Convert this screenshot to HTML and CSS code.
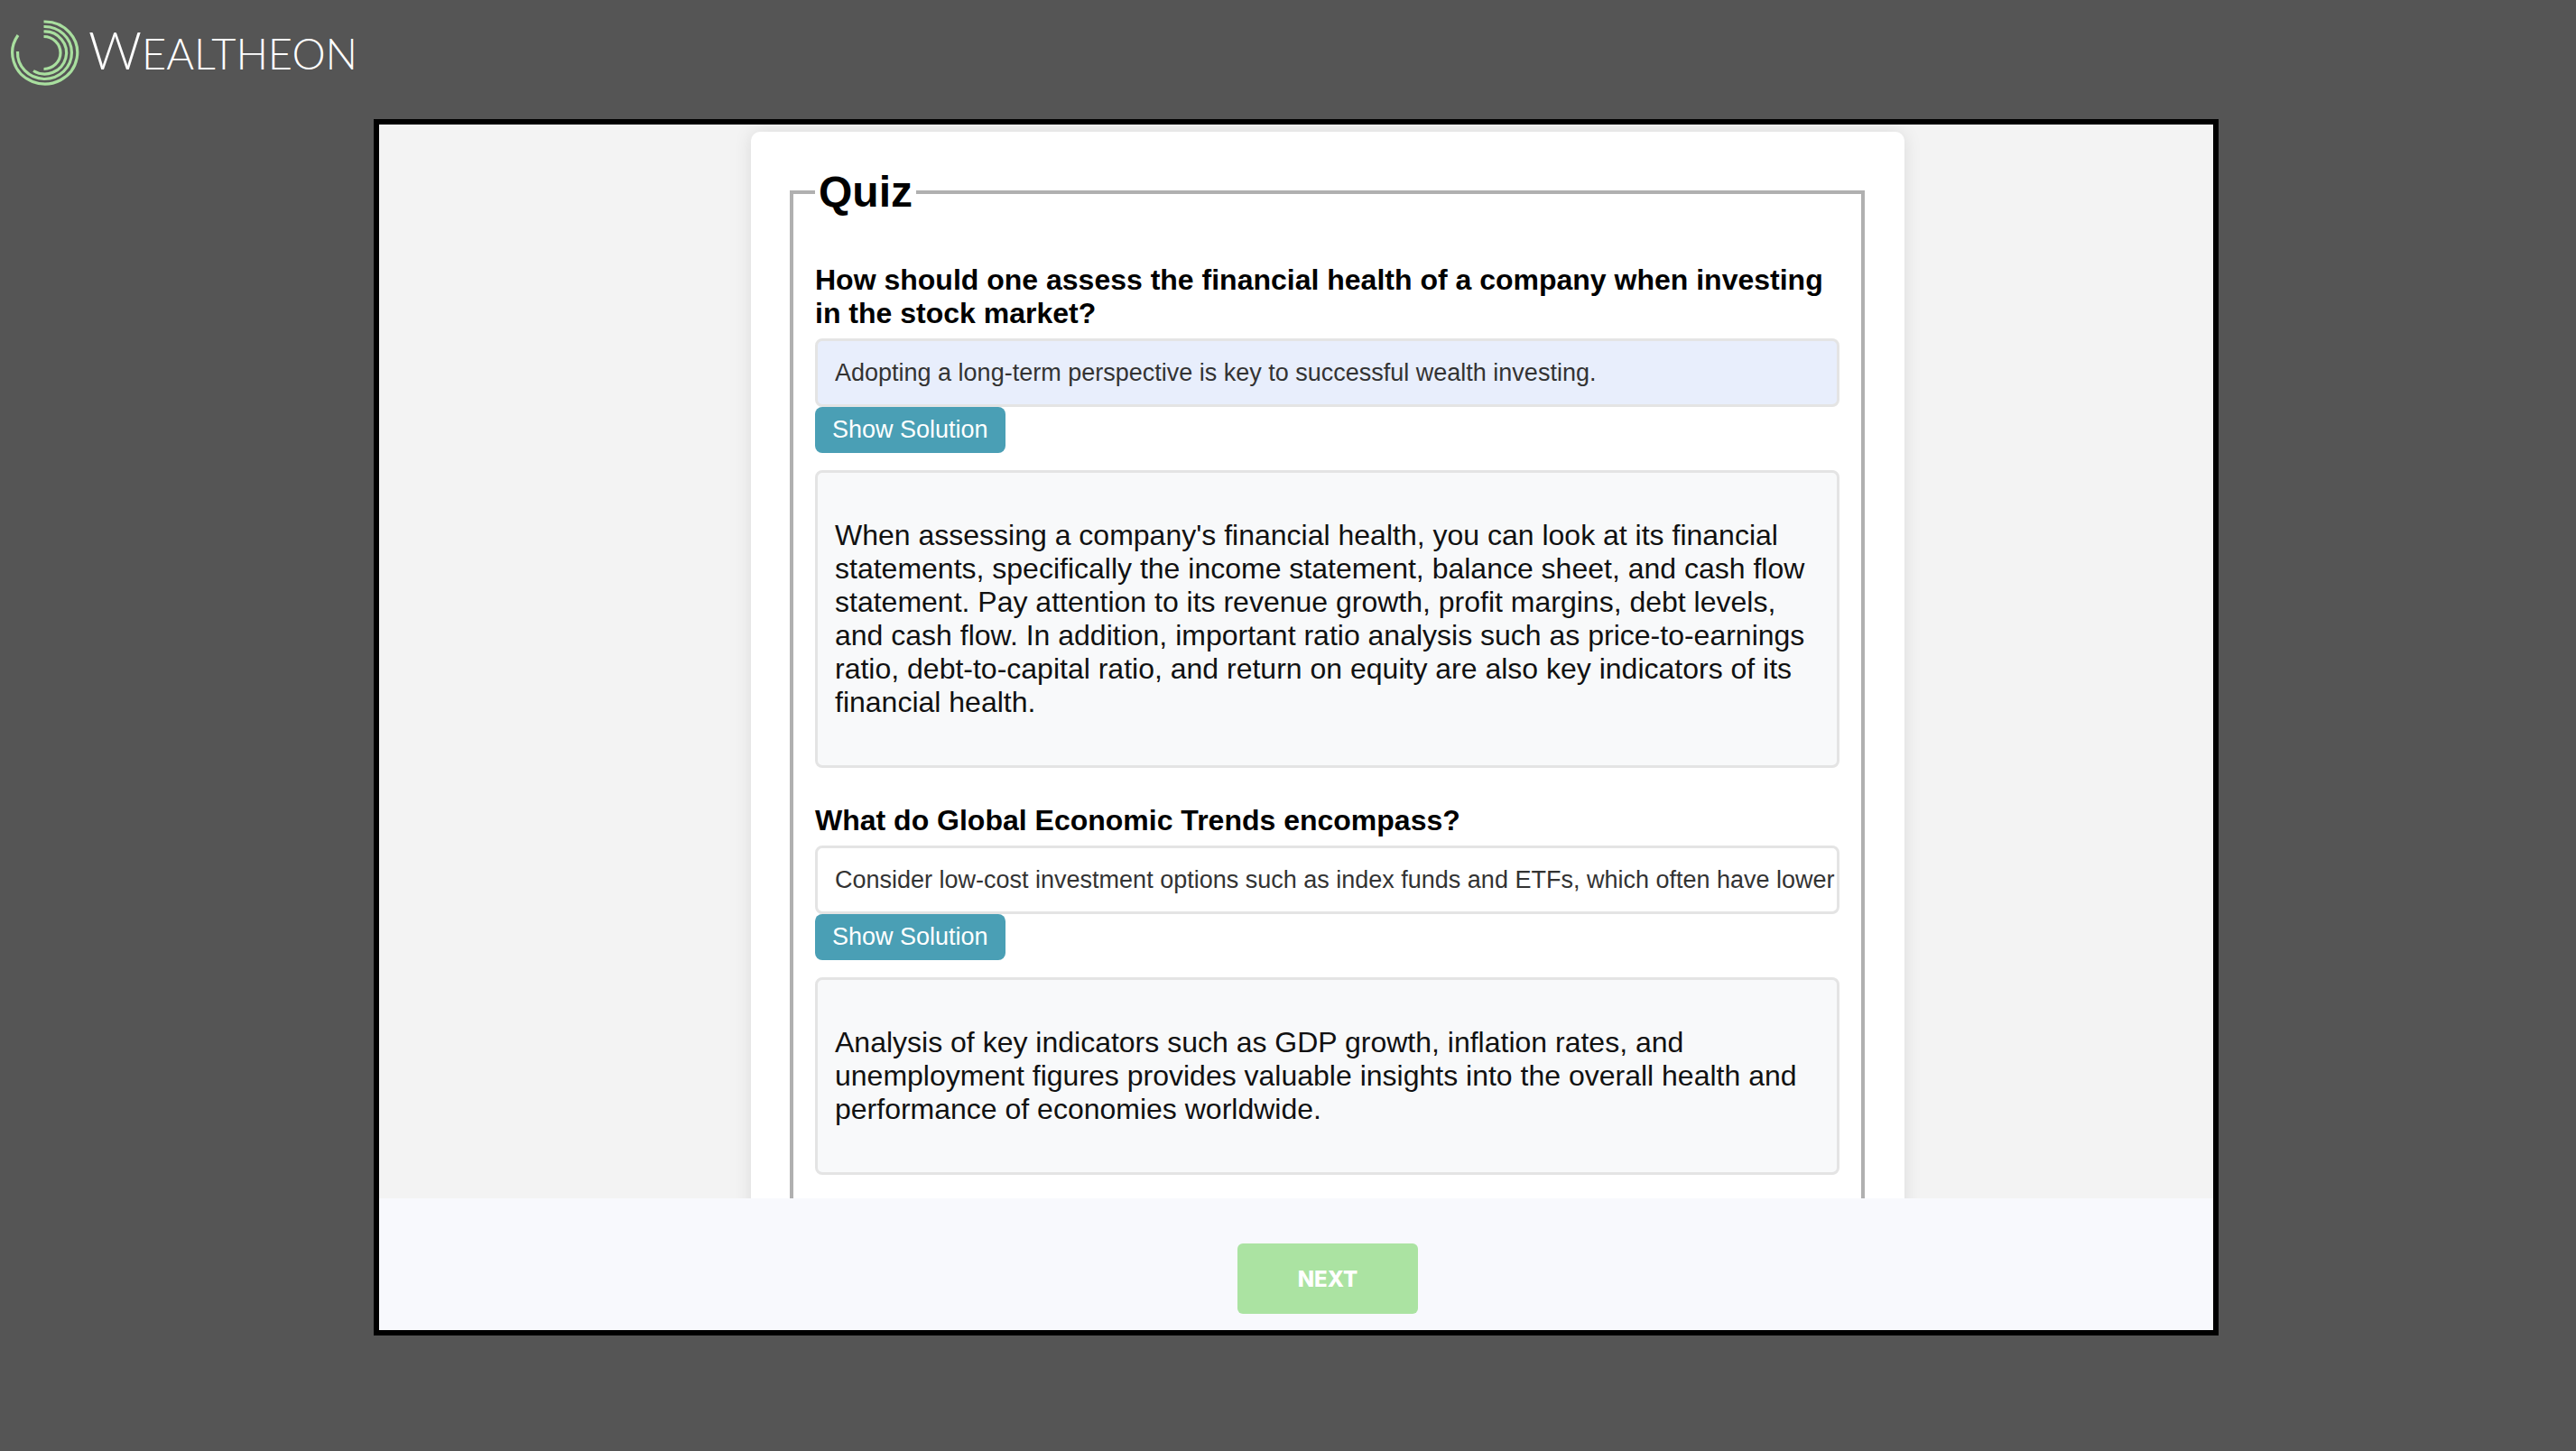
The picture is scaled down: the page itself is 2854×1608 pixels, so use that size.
FILE: index.html
```html
<!DOCTYPE html>
<html lang="en">
<head>
<meta charset="utf-8">
<title>Wealtheon – Quiz</title>
<link rel="stylesheet" href="styles.css">
</head>
<body>
<header class="header">
  <a class="brand" href="#" aria-label="Wealtheon">
    <svg class="brand-mark" viewBox="0 0 80 76" aria-hidden="true">
      <g fill="none" stroke="#a9df9f" stroke-width="3.200">
        <path d="M38.500 5A36 34.500 0 1 1 10 20"/>
        <path d="M38.500 10.500A30 29 0 1 1 9.500 38"/>
        <path d="M38.500 16A24 23.500 0 1 1 27 59.500"/>
        <path d="M38.500 21.500A18.500 18 0 1 1 38.500 57.500"/>
      </g>
    </svg>
    <span class="brand-name"><span class="brand-initial">W</span>EALTHEON</span>
  </a>
</header>
<main class="frame">
  <div class="viewport">
    <form class="card" id="quiz">
      <fieldset class="quiz">
        <legend class="quiz-title">Quiz</legend>
        <section class="item">
          <label class="question" for="answer-1">How should one assess the financial health of a company when investing in the stock market?</label>
          <input class="answer answer-filled" id="answer-1" type="text" value="Adopting a long-term perspective is key to successful wealth investing.">
          <button class="reveal" type="button">Show Solution</button>
          <div class="solution"><p class="solution-text">When assessing a company's financial health, you can look at its financial statements, specifically the income statement, balance sheet, and cash flow statement. Pay attention to its revenue growth, profit margins, debt levels, and cash flow. In addition, important ratio analysis such as price-to-earnings ratio, debt-to-capital ratio, and return on equity are also key indicators of its financial health.</p></div>
        </section>
        <section class="item">
          <label class="question" for="answer-2">What do Global Economic Trends encompass?</label>
          <input class="answer" id="answer-2" type="text" value="Consider low-cost investment options such as index funds and ETFs, which often have lower">
          <button class="reveal" type="button">Show Solution</button>
          <div class="solution"><p class="solution-text">Analysis of key indicators such as GDP growth, inflation rates, and unemployment figures provides valuable insights into the overall health and performance of economies worldwide.</p></div>
        </section>
      </fieldset>
    </form>
  </div>
  <footer class="footer">
    <button class="next" type="submit" form="quiz">NEXT</button>
  </footer>
</main>
</body>
</html>
```
FILE: styles.css
```css
* {
  box-sizing: border-box;
}

body {
  margin: 0;
  min-height: 100vh;
  display: flex;
  flex-direction: column;
  background: #555;
  color: #111;
  font-family: "Liberation Sans", Arial, sans-serif;
  font-size: 32px;
  line-height: 37px;
}

.header {
  padding: 17px 10px 0;
  height: 132px;
}

.brand {
  display: inline-flex;
  align-items: center;
  gap: 8px;
  color: #fff;
  text-decoration: none;
}

.brand-mark {
  width: 80px;
  height: 76px;
}

.brand-name {
  font-family: Lato, sans-serif;
  font-weight: 300;
  font-size: 47px;
  line-height: 76px;
}

.brand-initial {
  font-size: 58px;
}

.frame {
  flex: 1;
  display: flex;
  flex-direction: column;
  margin: 0 396px 128px 414px;
  border: 6px solid #000;
  background: #f8f9fd;
}

.viewport {
  flex: 1 1 0;
  min-height: 0;
  overflow: hidden;
  padding: 8px 342px 0 412px;
  background: #f3f3f3;
}

.card {
  min-height: 100%;
  padding: 39px 44px 40px 43px;
  border-radius: 10px;
  background: #fff;
  box-shadow: 0 0 20px rgba(0, 0, 0, 0.1);
}

.quiz {
  min-width: 0;
  margin: 0;
  padding: 11px 24px 60px;
  border: 4px solid #b0b0b0;
}

.quiz-title {
  padding: 0 4px;
  color: #000;
  font-size: 48px;
  font-weight: bold;
  line-height: 56px;
}

.item {
  display: flex;
  flex-direction: column;
  align-items: flex-start;
  padding-top: 40px;
}

.question {
  margin-bottom: 9px;
  color: #000;
  font-weight: bold;
}

.answer,
.solution {
  width: 100%;
  border: 3px solid #e4e4e4;
  border-radius: 8px;
}

.answer {
  height: 76px;
  padding: 0 0 0 19px;
  background: #fff;
  color: #333;
  font-family: inherit;
  font-size: 27px;
}

.answer-filled {
  background: #e8eefc;
}

.reveal {
  height: 51px;
  padding: 0 19px;
  border: 0;
  border-radius: 8px;
  background: #4a9fb5;
  color: #fff;
  font-family: inherit;
  font-size: 27px;
}

.solution {
  margin-top: 19px;
  padding: 51px 19px;
  background: #f8f9fa;
}

.solution-text {
  margin: 0;
}

.footer {
  display: flex;
  justify-content: center;
  padding: 50px 0 18px 70px;
}

.next {
  width: 200px;
  height: 78px;
  border: 0;
  border-radius: 6px;
  background: #abe3a2;
  color: #fff;
  font-family: Inter, sans-serif;
  font-size: 24px;
  font-weight: 800;
}
```
